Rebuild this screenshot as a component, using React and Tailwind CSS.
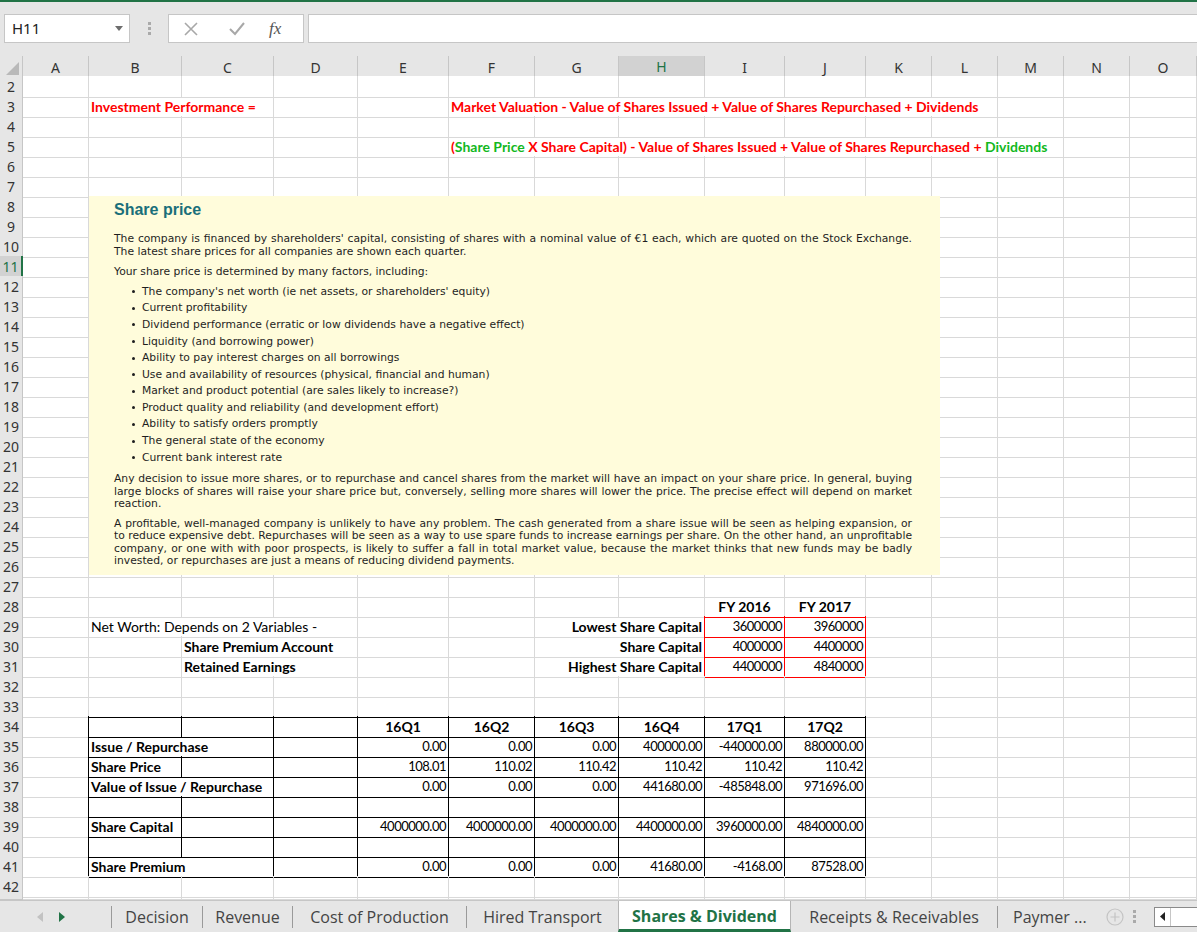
import React from "react";

const TEMPLATE =
  "grid grid-cols-[23px_66px_93px_92px_84px_91px_86px_84px_86px_80px_81px_66px_66px_66px_66px_67px]";
const COLS = ["A", "B", "C", "D", "E", "F", "G", "H", "I", "J", "K", "L", "M", "N", "O"];

const GRID_R = "border-r-[#d9d9d9]";
const GRID_B = "border-b-[#d9d9d9]";
const BLACK_R = "border-r-black";
const BLACK_B = "border-b-black";
const RED_R = "border-r-[#ff0000]";
const RED_B = "border-b-[#ff0000]";

const SPAN = { 1: "", 2: "col-span-2", 3: "col-span-3", 7: "col-span-7", 8: "col-span-8" };

const BOLD_RED = "font-bold text-[#ff0000]";
const GREEN = "text-[#12b81e]";
const NUM = "justify-end text-[13px] tracking-[-0.5px]";

// hand-placed cells outside the bordered table
const ROWS = {
  3: {
    B: { span: 2, text: "Investment Performance =", cls: BOLD_RED },
    F: {
      span: 7,
      text: "Market Valuation - Value of Shares Issued + Value of Shares Repurchased + Dividends",
      cls: BOLD_RED,
    },
  },
  5: {
    F: {
      span: 8,
      cls: BOLD_RED,
      text: (
        <>
          (<span className={GREEN}>Share Price</span>
          {" X Share Capital) - Value of Shares Issued + Value of Shares Repurchased + "}
          <span className={GREEN}>Dividends</span>
        </>
      ),
    },
  },
  28: {
    I: { text: "FY 2016", cls: "font-bold justify-center", b: RED_B },
    J: { text: "FY 2017", cls: "font-bold justify-center", b: RED_B },
  },
  29: {
    B: { span: 3, text: "Net Worth: Depends on 2 Variables -" },
    G: { span: 2, text: "Lowest Share Capital", cls: "font-bold justify-end", r: RED_R },
    I: { text: "3600000", cls: NUM, r: RED_R, b: RED_B },
    J: { text: "3960000", cls: NUM, r: RED_R, b: RED_B },
  },
  30: {
    C: { span: 2, text: "Share Premium Account", cls: "font-bold" },
    G: { span: 2, text: "Share Capital", cls: "font-bold justify-end", r: RED_R },
    I: { text: "4000000", cls: NUM, r: RED_R, b: RED_B },
    J: { text: "4400000", cls: NUM, r: RED_R, b: RED_B },
  },
  31: {
    C: { span: 2, text: "Retained Earnings", cls: "font-bold" },
    G: { span: 2, text: "Highest Share Capital", cls: "font-bold justify-end", r: RED_R },
    I: { text: "4400000", cls: NUM, r: RED_R, b: RED_B },
    J: { text: "4840000", cls: NUM, r: RED_R, b: RED_B },
  },
  33: {},
};

// top edge of the black table
["B", "C", "D", "E", "F", "G", "H", "I", "J"].forEach((c) => {
  ROWS[33][c] = { b: BLACK_B };
});

const QUARTERS = ["16Q1", "16Q2", "16Q3", "16Q4", "17Q1", "17Q2"];
const TABLE = [
  [34, null, 1, QUARTERS],
  [35, "Issue / Repurchase", 2, ["0.00", "0.00", "0.00", "400000.00", "-440000.00", "880000.00"]],
  [36, "Share Price", 1, ["108.01", "110.02", "110.42", "110.42", "110.42", "110.42"]],
  [37, "Value of Issue / Repurchase", 2, ["0.00", "0.00", "0.00", "441680.00", "-485848.00", "971696.00"]],
  [38, "", 1, ["", "", "", "", "", ""]],
  [39, "Share Capital", 1, ["4000000.00", "4000000.00", "4000000.00", "4400000.00", "3960000.00", "4840000.00"]],
  [40, "", 1, ["", "", "", "", "", ""]],
  [41, "Share Premium", 2, ["0.00", "0.00", "0.00", "41680.00", "-4168.00", "87528.00"]],
];

TABLE.forEach(([n, label, span, values]) => {
  const row = { A: { r: BLACK_R } };
  const edge = { r: BLACK_R, b: BLACK_B };
  row.B = { ...edge, span, text: label, cls: "font-bold" };
  if (span === 1) row.C = { ...edge };
  row.D = { ...edge };
  ["E", "F", "G", "H", "I", "J"].forEach((c, i) => {
    row[c] = {
      ...edge,
      text: values[i],
      cls: label === null ? "font-bold justify-center" : NUM,
    };
  });
  ROWS[n] = row;
});

const BULLETS = [
  "The company's net worth (ie net assets, or shareholders' equity)",
  "Current profitability",
  "Dividend performance (erratic or low dividends have a negative effect)",
  "Liquidity (and borrowing power)",
  "Ability to pay interest charges on all borrowings",
  "Use and availability of resources (physical, financial and human)",
  "Market and product potential (are sales likely to increase?)",
  "Product quality and reliability (and development effort)",
  "Ability to satisfy orders promptly",
  "The general state of the economy",
  "Current bank interest rate",
];

const FULL = "w-[798px] whitespace-nowrap text-justify [text-align-last:justify]";

function SheetRow({ n, spec = {}, short }) {
  const cells = [];
  for (let i = 0; i < COLS.length; ) {
    const col = COLS[i];
    const s = spec[col] || {};
    const span = s.span || 1;
    cells.push(
      <div
        key={col}
        className={`${SPAN[span]} flex items-center whitespace-nowrap border-r border-b px-[2px] ${s.r || GRID_R} ${s.b || GRID_B} ${s.cls || ""}`}
      >
        {s.text ? <span>{s.text}</span> : null}
      </div>
    );
    i += span;
  }
  const sel = n === 11;
  return (
    <div className={`${TEMPLATE} ${short ? "h-[4px] overflow-hidden" : "h-[20px]"}`}>
      <div
        className={`flex items-center justify-center border-b border-b-[#c6c6c6] font-['Noto_Sans',sans-serif] text-[14px] ${
          sel
            ? "border-r-2 border-r-[#217346] bg-[#d2d2d2] text-[#217346]"
            : "border-r border-r-[#c6c6c6] bg-[#e6e6e6] text-[#333]"
        }`}
      >
        {short ? "" : n}
      </div>
      {cells}
    </div>
  );
}

function SharePriceBox() {
  return (
    <div className="absolute left-[89px] top-[120px] h-[379px] w-[851px] bg-[#fffcdb] pl-[25px] font-['DejaVu_Sans',sans-serif] text-[10.75px] text-[#1e1e1e]">
      <div className="mt-[4px] flex h-[20px] items-center font-['Liberation_Sans',sans-serif] text-[16px] font-bold text-[#1a6f7a]">
        Share price
      </div>
      <div className="mt-[13px] leading-[12.5px]">
        <div className={FULL}>
          The company is financed by shareholders' capital, consisting of shares with a nominal value of €1
          each, which are quoted on the Stock Exchange.
        </div>
        <div>The latest share prices for all companies are shown each quarter.</div>
      </div>
      <div className="mt-[8px] leading-[12.5px]">Your share price is determined by many factors, including:</div>
      <ul className="mt-[5px]">
        {BULLETS.map((b) => (
          <li key={b} className="flex h-[16.6px] items-center">
            <span className="ml-[18px] mr-[7px] h-[3px] w-[3px] rounded-full bg-[#1e1e1e]" />
            {b}
          </li>
        ))}
      </ul>
      <div className="mt-[7px] leading-[12.5px]">
        <div className={FULL}>
          Any decision to issue more shares, or to repurchase and cancel shares from the market will have an
          impact on your share price. In general, buying
        </div>
        <div className={FULL}>
          large blocks of shares will raise your share price but, conversely, selling more shares will lower
          the price. The precise effect will depend on market
        </div>
        <div>reaction.</div>
      </div>
      <div className="mt-[7px] leading-[12.5px]">
        <div className={FULL}>
          A profitable, well-managed company is unlikely to have any problem. The cash generated from a share
          issue will be seen as helping expansion, or
        </div>
        <div className={FULL}>
          to reduce expensive debt. Repurchases will be seen as a way to use spare funds to increase earnings
          per share. On the other hand, an unprofitable
        </div>
        <div className={FULL}>
          company, or one with with poor prospects, is likely to suffer a fall in total market value, because
          the market thinks that new funds may be badly
        </div>
        <div>invested, or repurchases are just a means of reducing dividend payments.</div>
      </div>
    </div>
  );
}

function FormulaBar() {
  return (
    <div className="flex h-[54px] items-start pl-[4px] pt-[12px]">
      <div className="flex h-[29px] w-[126px] items-center justify-between border border-[#c6c6c6] bg-white pl-[7px] pr-[6px] font-['Noto_Sans',sans-serif] text-[15px] text-[#222]">
        H11
        <svg width="8" height="5" viewBox="0 0 8 5">
          <path d="M0 0h8L4 5z" fill="#6d6d6d" />
        </svg>
      </div>
      <div className="flex h-[29px] w-[38px] flex-col items-center justify-center gap-[2px]">
        <span className="h-[3px] w-[3px] bg-[#aaa]" />
        <span className="h-[3px] w-[3px] bg-[#aaa]" />
        <span className="h-[3px] w-[3px] bg-[#aaa]" />
      </div>
      <div className="flex h-[29px] w-[136px] items-center border border-[#c6c6c6] bg-white">
        <svg className="ml-[15px]" width="14" height="14" viewBox="0 0 14 14">
          <path d="M1 1l12 12M13 1L1 13" stroke="#a8a8a8" strokeWidth="1.6" fill="none" />
        </svg>
        <svg className="ml-[31px]" width="16" height="14" viewBox="0 0 16 14">
          <path d="M1 7l5 5L15 1" stroke="#a8a8a8" strokeWidth="2" fill="none" />
        </svg>
        <span className="ml-[24px] font-['Liberation_Serif',serif] text-[17px] italic text-[#555]">fx</span>
      </div>
      <div className="ml-[4px] h-[29px] flex-1 border border-r-0 border-[#c6c6c6] bg-white" />
    </div>
  );
}

function ColumnHeaders() {
  return (
    <div className={`${TEMPLATE} h-[20px] font-['Noto_Sans',sans-serif] text-[14px]`}>
      <div className="relative border-r border-b border-[#c6c6c6] bg-[#e6e6e6]">
        <svg className="absolute bottom-[3px] right-[3px]" width="13" height="13" viewBox="0 0 13 13">
          <path d="M13 0v13H0z" fill="#b9b9b9" />
        </svg>
      </div>
      {COLS.map((c) =>
        c === "H" ? (
          <div
            key={c}
            className="flex items-center justify-center border-r border-r-[#c6c6c6] border-b-2 border-b-[#217346] bg-[#d2d2d2] text-[#217346]"
          >
            {c}
          </div>
        ) : (
          <div
            key={c}
            className="flex items-center justify-center border-r border-b border-[#c6c6c6] bg-[#e6e6e6] text-[#333]"
          >
            {c}
          </div>
        )
      )}
    </div>
  );
}

function Sep() {
  return <div className="h-[22px] w-px bg-[#9a9a9a]" />;
}

function TabBar() {
  return (
    <div className="flex h-[32px] items-center border-t border-[#c6c6c6] bg-[#e6e6e6] font-['Open_Sans',sans-serif] text-[16px] text-[#444]">
      <div className="flex w-[111px] items-center">
        <svg className="ml-[37px]" width="6" height="10" viewBox="0 0 6 10">
          <path d="M6 0v10L0 5z" fill="#c2c2c2" />
        </svg>
        <svg className="ml-[16px]" width="6" height="10" viewBox="0 0 6 10">
          <path d="M0 0v10l6-5z" fill="#217346" />
        </svg>
      </div>
      <Sep />
      <div className="w-[90px] text-center">Decision</div>
      <Sep />
      <div className="w-[89px] text-center">Revenue</div>
      <Sep />
      <div className="w-[173px] text-center">Cost of Production</div>
      <Sep />
      <div className="w-[151px] text-center">Hired Transport</div>
      <div className="flex h-full w-[173px] items-center justify-center border-x border-[#b5b5b5] border-b-[3px] border-b-[#217346] bg-white pt-[2px] font-bold text-[#217346]">
        Shares &amp; Dividend
      </div>
      <div className="w-[206px] text-center">Receipts &amp; Receivables</div>
      <Sep />
      <div className="w-[104px] pl-[15px]">Paymer ...</div>
      <svg width="18" height="18" viewBox="0 0 18 18" className="ml-[4px]">
        <circle cx="9" cy="9" r="8" stroke="#c4c4c4" strokeWidth="1.2" fill="none" />
        <path d="M9 4.5v9M4.5 9h9" stroke="#c4c4c4" strokeWidth="1.2" />
      </svg>
      <div className="ml-[9px] flex flex-col gap-[2px]">
        <span className="h-[3px] w-[3px] bg-[#aaa]" />
        <span className="h-[3px] w-[3px] bg-[#aaa]" />
        <span className="h-[3px] w-[3px] bg-[#aaa]" />
      </div>
      <div className="ml-[18px] flex h-[20px] flex-1 items-center border border-r-0 border-[#8a8a8a] bg-white">
        <div className="flex h-full w-[16px] items-center justify-center border-r border-[#c6c6c6]">
          <svg width="5" height="9" viewBox="0 0 5 9">
            <path d="M5 0v9L0 4.5z" fill="#222" />
          </svg>
        </div>
      </div>
    </div>
  );
}

export default function App() {
  const rows = [];
  for (let n = 2; n <= 42; n++) rows.push(n);
  return (
    <div className="h-[932px] w-[1197px] overflow-hidden bg-[#e6e6e6]">
      <div className="h-[2px] bg-[#217346]" />
      <FormulaBar />
      <ColumnHeaders />
      <div className="relative bg-white font-['Lato',sans-serif] text-[14px] text-black">
        {rows.map((n) => (
          <SheetRow key={n} n={n} spec={ROWS[n]} />
        ))}
        <SheetRow n={43} short />
        <SharePriceBox />
      </div>
      <TabBar />
    </div>
  );
}
